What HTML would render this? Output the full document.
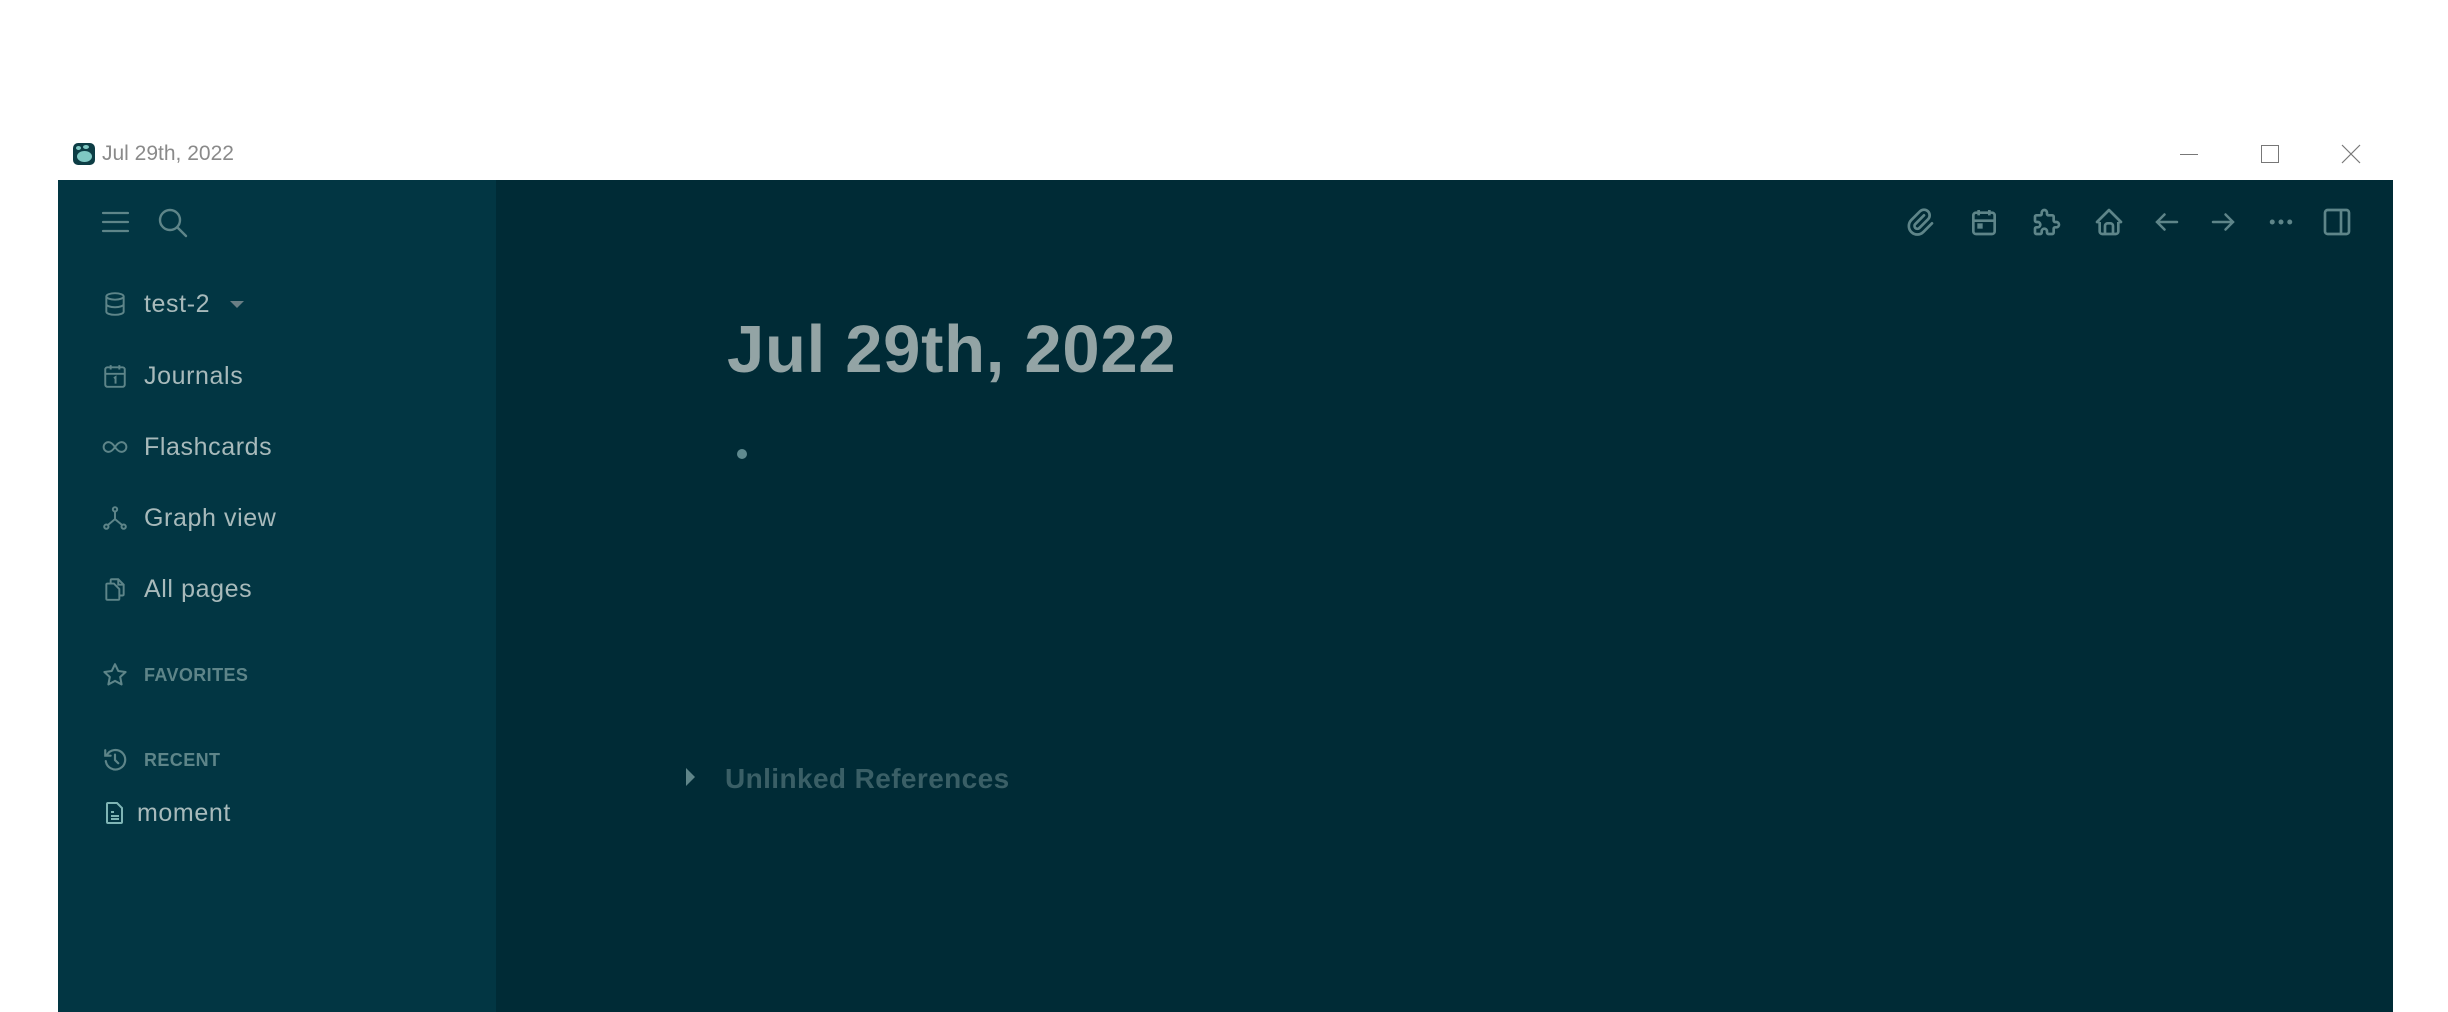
<!DOCTYPE html>
<html><head><meta charset="utf-8"><style>
*{margin:0;padding:0;box-sizing:border-box}
body{width:2448px;height:1012px;background:#fff;position:relative;overflow:hidden;font-family:"Liberation Sans",sans-serif}
.abs{position:absolute}
#app{left:58px;top:180px;width:2335px;height:832px;background:#002b36}
#side{left:58px;top:180px;width:438px;height:832px;background:#023643}
.item{position:absolute;left:144px;font-size:25px;color:#a8babb;line-height:30px;letter-spacing:0.6px}
.ico{position:absolute;left:102px;width:26px;height:26px}
.hdr{position:absolute;left:144px;font-size:18px;font-weight:bold;color:#5e8589;line-height:22px;letter-spacing:0.4px}
svg{overflow:visible}
</style></head><body>
<div class="abs" style="left:73px;top:143px;width:22px;height:22px;background:#0d3d45;border-radius:5px">
 <div class="abs" style="left:4px;top:8px;width:15px;height:11px;background:#7fc8c3;border-radius:50%"></div>
 <div class="abs" style="left:3px;top:3px;width:5px;height:4px;background:#7fc8c3;border-radius:50%"></div>
 <div class="abs" style="left:10px;top:2px;width:6px;height:4px;background:#7fc8c3;border-radius:50%"></div>
</div>
<div class="abs" style="left:102px;top:142px;font-size:21px;color:#8a8a8a">Jul 29th, 2022</div>
<div class="abs" style="left:2180px;top:154px;width:18px;height:1px;background:#777"></div>
<div class="abs" style="left:2261px;top:145px;width:18px;height:18px;border:1px solid #777"></div>
<svg class="abs" style="left:2342px;top:145px" width="18" height="18"><path d="M0 0L18 18M18 0L0 18" stroke="#777" stroke-width="1.2"/></svg>

<div id="app" class="abs"></div>
<div id="side" class="abs"></div>

<svg class="abs" style="left:102px;top:210px" width="27" height="24"><path d="M1 3H26M1 12H26M1 21H26" stroke="#5e8589" stroke-width="2.2" stroke-linecap="round"/></svg>
<svg class="abs" style="left:157px;top:207px" width="32" height="32"><circle cx="13" cy="13" r="10" fill="none" stroke="#5e8589" stroke-width="2.4"/><path d="M20.5 20.5L29 29" stroke="#5e8589" stroke-width="2.4" stroke-linecap="round"/></svg>

<svg class="ico" style="top:291px" viewBox="0 0 24 24" fill="none" stroke="#5e8589" stroke-width="1.8"><ellipse cx="12" cy="5" rx="8" ry="3"/><path d="M4 5v14c0 1.7 3.6 3 8 3s8-1.3 8-3V5M4 12c0 1.7 3.6 3 8 3s8-1.3 8-3"/></svg>
<div class="item" style="top:289px">test-2</div>
<svg class="abs" style="left:230px;top:301px" width="14" height="8"><path d="M0 0H14L7 7Z" fill="#6a7f85"/></svg>

<svg class="ico" style="top:363px" viewBox="0 0 24 24" fill="none" stroke="#5e8589" stroke-width="1.8"><rect x="3" y="4" width="18" height="18" rx="2"/><path d="M3 10H21M8 2v4M16 2v4M11 14l1.5-1v6"/></svg>
<div class="item" style="top:361px">Journals</div>

<svg class="ico" style="top:434px" viewBox="0 0 24 24" fill="none" stroke="#5e8589" stroke-width="1.8"><path d="M12 12c-2-3-4-4.5-6-4.5a4.5 4.5 0 0 0 0 9c2 0 4-1.5 6-4.5zm0 0c2 3 4 4.5 6 4.5a4.5 4.5 0 0 0 0-9c-2 0-4 1.5-6 4.5z"/></svg>
<div class="item" style="top:432px">Flashcards</div>

<svg class="ico" style="top:505px" viewBox="0 0 24 24" fill="none" stroke="#5e8589" stroke-width="1.8"><circle cx="12" cy="4" r="2"/><circle cx="4" cy="20" r="2"/><circle cx="20" cy="20" r="2"/><path d="M12 6v7l-6.5 5.5M12 13l6.5 5.5"/></svg>
<div class="item" style="top:503px">Graph view</div>

<svg class="ico" style="top:576px" viewBox="0 0 24 24" fill="none" stroke="#5e8589" stroke-width="1.8"><path d="M8 7V4a1 1 0 0 1 1-1h6l5 5v9a1 1 0 0 1-1 1h-3"/><path d="M15 3v5h5"/><path d="M5 7h6l5 5v9a1 1 0 0 1-1 1H5a1 1 0 0 1-1-1V8a1 1 0 0 1 1-1z"/></svg>
<div class="item" style="top:574px">All pages</div>

<svg class="ico" style="top:662px" viewBox="0 0 24 24" fill="none" stroke="#5e8589" stroke-width="1.9" stroke-linejoin="round"><path d="M12 2l3 6.3 6.8.9-5 4.7 1.3 6.8L12 17.4l-6.1 3.3 1.3-6.8-5-4.7 6.8-.9z"/></svg>
<div class="hdr" style="top:664px">FAVORITES</div>

<svg class="ico" style="top:747px" viewBox="0 0 24 24" fill="none" stroke="#5e8589" stroke-width="2" stroke-linecap="round"><path d="M12 7v5l3 3"/><path d="M3.5 13A9 9 0 1 0 4.5 7.5M3 3v5h5"/></svg>
<div class="hdr" style="top:749px">RECENT</div>

<svg class="abs" style="left:106px;top:802px" width="18" height="22" viewBox="0 0 18 22" fill="none" stroke="#7fb5b5" stroke-width="2"><path d="M2 1h9l5 5v14a1 1 0 0 1-1 1H2a1 1 0 0 1-1-1V2a1 1 0 0 1 1-1z"/><path d="M5 10h3M5 14h8M5 17h8"/></svg>
<div class="item" style="left:137px;top:798px">moment</div>

<svg class="abs" style="left:1904px;top:206px" width="32" height="32" viewBox="0 0 24 24" fill="none" stroke="#5e8589" stroke-width="2" stroke-linecap="round"><path d="M15 7l-6.5 6.5a1.5 1.5 0 0 0 3 3L18 10a3 3 0 0 0-6-6l-6.5 6.5a4.5 4.5 0 0 0 9 9L21 13"/></svg>
<svg class="abs" style="left:1968px;top:206px" width="32" height="32" viewBox="0 0 24 24" fill="none" stroke="#5e8589" stroke-width="2"><rect x="4" y="5" width="16" height="16" rx="2"/><path d="M4 11h16M8 3v4M16 3v4"/><rect x="8" y="14" width="2" height="2" fill="#5e8589"/></svg>
<svg class="abs" style="left:2031px;top:206px" width="32" height="32" viewBox="0 0 24 24" fill="none" stroke="#5e8589" stroke-width="2" stroke-linejoin="round"><path d="M4 7h3a1 1 0 0 0 1-1V5a2 2 0 0 1 4 0v1a1 1 0 0 0 1 1h3a1 1 0 0 1 1 1v3a1 1 0 0 0 1 1h1a2 2 0 0 1 0 4h-1a1 1 0 0 0-1 1v3a1 1 0 0 1-1 1h-3a1 1 0 0 1-1-1v-1a2 2 0 0 0-4 0v1a1 1 0 0 1-1 1H4a1 1 0 0 1-1-1v-3a1 1 0 0 1 1-1h1a2 2 0 0 0 0-4H4a1 1 0 0 1-1-1V8a1 1 0 0 1 1-1"/></svg>
<svg class="abs" style="left:2093px;top:206px" width="32" height="32" viewBox="0 0 24 24" fill="none" stroke="#5e8589" stroke-width="2" stroke-linejoin="round"><path d="M5 12H3l9-9 9 9h-2M5 12v7a2 2 0 0 0 2 2h10a2 2 0 0 0 2-2v-7"/><path d="M9 21v-6a2 2 0 0 1 2-2h2a2 2 0 0 1 2 2v6"/></svg>
<svg class="abs" style="left:2152px;top:207px" width="30" height="30" viewBox="0 0 24 24" fill="none" stroke="#5e8589" stroke-width="2" stroke-linecap="round"><path d="M20 12H4M10 6l-6 6 6 6"/></svg>
<svg class="abs" style="left:2208px;top:207px" width="30" height="30" viewBox="0 0 24 24" fill="none" stroke="#5e8589" stroke-width="2" stroke-linecap="round"><path d="M4 12h16M14 6l6 6-6 6"/></svg>
<svg class="abs" style="left:2266px;top:207px" width="30" height="30" viewBox="0 0 24 24" fill="#5e8589"><circle cx="5" cy="12" r="2"/><circle cx="12" cy="12" r="2"/><circle cx="19" cy="12" r="2"/></svg>
<svg class="abs" style="left:2321px;top:206px" width="32" height="32" viewBox="0 0 24 24" fill="none" stroke="#5e8589" stroke-width="2"><rect x="3" y="3" width="18" height="18" rx="2"/><path d="M15 3v18"/></svg>

<div class="abs" style="left:727px;top:310px;font-size:67px;font-weight:bold;color:#93a4a5;line-height:80px;letter-spacing:0.7px">Jul 29th, 2022</div>
<div class="abs" style="left:737px;top:449px;width:10px;height:10px;border-radius:50%;background:#5f8a8f"></div>
<svg class="abs" style="left:686px;top:768px" width="10" height="18"><path d="M0 0L9 9L0 18Z" fill="#5f8589"/></svg>
<div class="abs" style="left:725px;top:763px;font-size:28px;font-weight:bold;color:#3a5f66;line-height:32px;letter-spacing:0.4px">Unlinked References</div>
</body></html>
